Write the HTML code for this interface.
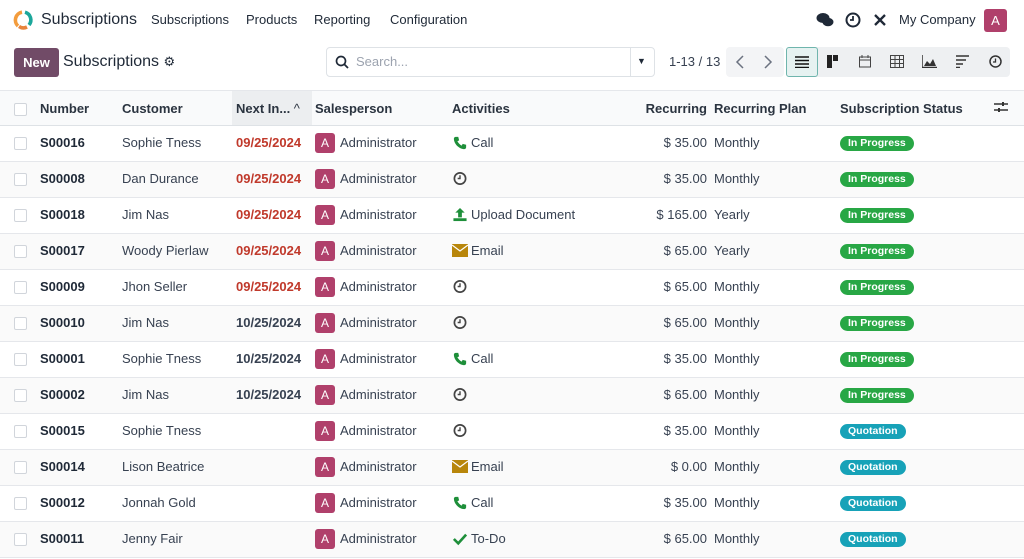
<!DOCTYPE html>
<html><head><meta charset="utf-8"><style>
*{box-sizing:border-box;margin:0;padding:0}
body{width:1024px;height:559px;overflow:hidden;background:#fff;font-family:"Liberation Sans","DejaVu Sans",sans-serif;color:#374151;font-size:13px}
.top{height:40px;position:relative}
.abs{position:absolute;white-space:nowrap}
.nav{font-size:13px;color:#1f2937;top:12px}
.ctl{height:52px;position:relative}
.btn{background:#714b67;color:#fff;font-weight:bold;border-radius:3px}
table{border-collapse:collapse;width:1024px;position:absolute;top:90px;left:0}
th{height:35px;text-align:left;font-weight:bold;color:#2b3440;border-top:1px solid #e5e7eb;border-bottom:1px solid #dee2e6;background:#f9fafb}
td{height:36px;border-bottom:1px solid #e5e7eb;vertical-align:middle;padding-bottom:2px}
tr.alt td{background:#fafafa}
.f{display:flex;align-items:center;height:20px}
.cb{display:inline-block;width:13px;height:13px;border:1px solid #d1d5db;border-radius:2px;background:#fff;vertical-align:middle}
.num{font-weight:bold;color:#1f2937}
.red{color:#c0392b;font-weight:bold}
.dt{color:#374151;font-weight:bold}
.av{display:inline-block;width:20px;height:20px;background:#b0406b;color:#fff;border-radius:3px;text-align:center;line-height:20px;font-size:12px;margin-right:5px}
.bd{display:inline-block;color:#fff;font-size:10.5px;font-weight:bold;border-radius:8px;height:15px;line-height:15px;padding:0 8px}
.g{background:#28a745}.q{background:#17a2b8}
.ic{display:inline-block;width:16px;margin-right:3px}
.r{text-align:right;padding-right:8px}
</style></head><body>
<div class="top">
 <svg class="abs" style="left:12px;top:9px" width="22" height="22" viewBox="0 0 22 22"><path d="M10 3.2A8 8 0 0 0 6 17" stroke="#f39c3c" stroke-width="3.6" fill="none"/><path d="M7 17.5A8 8 0 0 0 15 18" stroke="#e8843c" stroke-width="3.6" fill="none"/><path d="M13 3.2A8 8 0 0 1 17 16" stroke="#1ca79b" stroke-width="3.6" fill="none"/></svg>
 <div class="abs" style="left:41px;top:11px;font-size:16px;color:#1f2937">Subscriptions</div>
 <div class="abs nav" style="left:151px">Subscriptions</div>
 <div class="abs nav" style="left:246px">Products</div>
 <div class="abs nav" style="left:314px">Reporting</div>
 <div class="abs nav" style="left:390px">Configuration</div>
 <svg class="abs" style="left:816px;top:12px" width="18" height="16" viewBox="0 0 18 16"><ellipse cx="7" cy="6" rx="6.5" ry="5" fill="#1f2937"/><ellipse cx="12" cy="10" rx="5.5" ry="4.3" fill="#1f2937"/></svg>
 <svg class="abs" style="left:845px;top:12px" width="16" height="16" viewBox="0 0 16 16"><circle cx="8" cy="8" r="6.5" stroke="#1f2937" stroke-width="2" fill="none"/><path d="M8 4v4H5" stroke="#1f2937" stroke-width="1.8" fill="none"/></svg>
 <svg class="abs" style="left:872px;top:12px" width="16" height="16" viewBox="0 0 16 16"><path d="M3 3l10 10M13 3L3 13" stroke="#1f2937" stroke-width="2.3"/></svg>
 <div class="abs nav" style="left:899px">My Company</div>
 <div class="abs" style="left:984px;top:9px;width:23px;height:23px;background:#b0406b;color:#fff;border-radius:3px;text-align:center;line-height:23px;font-size:13px">A</div>
</div>
<div class="ctl">
 <div class="abs btn" style="left:14px;top:8px;width:45px;height:29px;line-height:29px;text-align:center">New</div>
 <div class="abs" style="left:63px;top:13px;font-size:16px;color:#1f2937">Subscriptions <span style="font-size:13px">⚙</span></div>
 <div class="abs" style="left:326px;top:7px;width:329px;height:30px;border:1px solid #dee2e6;border-radius:4px"></div>
 <div class="abs" style="left:630px;top:8px;width:1px;height:28px;background:#dee2e6"></div>
 <svg class="abs" style="left:335px;top:15px" width="14" height="14" viewBox="0 0 14 14"><circle cx="6" cy="6" r="4.5" stroke="#1f2937" stroke-width="1.7" fill="none"/><path d="M9.5 9.5l3.5 3.5" stroke="#1f2937" stroke-width="1.8"/></svg>
 <div class="abs" style="left:356px;top:14px;color:#9ca3af">Search...</div>
 <div class="abs" style="left:637px;top:16px;font-size:9px;color:#1f2937">▼</div>
 <div class="abs" style="left:669px;top:14px">1-13 / 13</div>
 <div class="abs" style="left:726px;top:7px;width:58px;height:30px;background:#f3f4f6;border-radius:4px"></div>
 <svg class="abs" style="left:735px;top:15px" width="10" height="14"><path d="M8 1L2 7l6 6" stroke="#6b7280" stroke-width="1.5" fill="none"/></svg>
 <svg class="abs" style="left:763px;top:15px" width="10" height="14"><path d="M2 1l6 6-6 6" stroke="#6b7280" stroke-width="1.5" fill="none"/></svg>
 <div class="abs" style="left:786px;top:7px;width:224px;height:30px;background:#eef0f2;border-radius:4px"></div>
 <div class="abs" style="left:786px;top:7px;width:32px;height:30px;background:#e6f2f1;border:1px solid #6fb5ad;border-radius:3px"></div>
 <svg class="abs" style="left:795px;top:16px" width="14" height="12"><path d="M0 1h14M0 4.5h14M0 8h14M0 11.5h14" stroke="#111" stroke-width="1.6"/></svg>
 <svg class="abs" style="left:827px;top:15px" width="14" height="13"><rect x="0" y="0" width="5" height="13" fill="#222"/><rect x="6" y="0" width="5" height="6" fill="#222"/></svg>
 <svg class="abs" style="left:859px;top:15px" width="12" height="13"><rect x="0.5" y="2" width="11" height="10" fill="none" stroke="#444"/><path d="M0 5h12M3 0v3M9 0v3" stroke="#444"/></svg>
 <svg class="abs" style="left:890px;top:15px" width="14" height="13"><rect x="0.5" y="0.5" width="13" height="12" fill="none" stroke="#444"/><path d="M0 4.5h14M0 8.5h14M5 0v13M9.5 0v13" stroke="#444"/></svg>
 <svg class="abs" style="left:922px;top:15px" width="15" height="13"><path d="M0 0v12.5h15" stroke="#333" stroke-width="1.5" fill="none"/><path d="M2 11l3-5 3 3 3-5 3 7z" fill="#333"/></svg>
 <svg class="abs" style="left:956px;top:15px" width="13" height="13"><path d="M0 1h13M0 5h10M0 9h7M0 12.5h4" stroke="#333" stroke-width="1.6"/></svg>
 <svg class="abs" style="left:989px;top:15px" width="13" height="13"><circle cx="6.5" cy="6.5" r="5.5" fill="none" stroke="#333" stroke-width="1.5"/><path d="M6.5 3.5v3.5H4" stroke="#333" stroke-width="1.3" fill="none"/></svg>
</div>
<table>
<tr><th style="width:40px;padding-left:14px"><span class="cb"></span></th><th style="width:82px">Number</th><th style="width:110px">Customer</th><th style="width:80px;background:#eceef0;padding-left:4px">Next In... <span style="font-weight:normal">^</span></th><th style="width:137px;padding-left:3px">Salesperson</th><th style="width:180px;padding-left:3px">Activities</th><th class="r" style="width:85px;padding-right:7px">Recurring</th><th style="width:126px">Recurring Plan</th><th>Subscription Status</th><th style="width:30px"><svg width="14" height="12"><path d="M0 3h14M0 9h14" stroke="#333" stroke-width="1.5"/><rect x="8" y="1" width="2" height="4" fill="#333"/><rect x="4" y="7" width="2" height="4" fill="#333"/></svg></th></tr>
<tbody id="b"></tbody>
</table>
<script>
const phone='<svg class="ic" viewBox="0 0 16 16" height="14"><path d="M3 1l3 0 1 4-2 1c1 2 3 4 5 5l1-2 4 1v3c0 1-1 2-2 2C7 15 1 9 1 3c0-1 1-2 2-2z" fill="#1e8f3a"/></svg>';
const clock='<svg class="ic" viewBox="0 0 16 16" height="15"><circle cx="8" cy="8" r="6" fill="none" stroke="#444" stroke-width="1.8"/><path d="M8 4.5V8H5.5" stroke="#444" stroke-width="1.5" fill="none"/></svg>';
const up='<svg class="ic" viewBox="0 0 16 16" height="15"><path d="M8 1l5 5H10v5H6V6H3z" fill="#1e8f3a"/><rect x="1" y="12" width="14" height="3" fill="#1e8f3a"/></svg>';
const mail='<svg class="ic" viewBox="0 0 16 13" height="13"><rect width="16" height="13" fill="#b8860b"/><path d="M0 1l8 6 8-6" stroke="#fff" stroke-width="1.2" fill="none"/></svg>';
const chk='<svg class="ic" viewBox="0 0 16 16" height="14"><path d="M1 8l5 5L15 3" stroke="#1e8f3a" stroke-width="3" fill="none"/></svg>';
const A={call:phone+'Call',clk:clock,up:up+'Upload Document',mail:mail+'Email',todo:chk+'To-Do'};
const rows=[['S00016','Sophie Tness','09/25/2024','call','35.00','Monthly',1],
['S00008','Dan Durance','09/25/2024','clk','35.00','Monthly',1],
['S00018','Jim Nas','09/25/2024','up','165.00','Yearly',1],
['S00017','Woody Pierlaw','09/25/2024','mail','65.00','Yearly',1],
['S00009','Jhon Seller','09/25/2024','clk','65.00','Monthly',1],
['S00010','Jim Nas','10/25/2024','clk','65.00','Monthly',1],
['S00001','Sophie Tness','10/25/2024','call','35.00','Monthly',1],
['S00002','Jim Nas','10/25/2024','clk','65.00','Monthly',1],
['S00015','Sophie Tness','','clk','35.00','Monthly',0],
['S00014','Lison Beatrice','','mail','0.00','Monthly',0],
['S00012','Jonnah Gold','','call','35.00','Monthly',0],
['S00011','Jenny Fair','','todo','65.00','Monthly',0]];
let h='';rows.forEach((r,i)=>{h+=`<tr class="${i%2?'alt':''}"><td style="padding-left:14px"><span class="cb"></span></td><td class="num">${r[0]}</td><td>${r[1]}</td><td class="${r[2].startsWith('09')?'red':'dt'}" style="padding-left:4px">${r[2]}</td><td style="padding-left:3px"><div class="f"><span class="av">A</span>Administrator</div></td><td style="padding-left:3px"><div class="f">${A[r[3]]}</div></td><td class="r" style="padding-right:7px">$ ${r[4]}</td><td>${r[5]}</td><td><span class="bd ${r[6]?'g':'q'}">${r[6]?'In Progress':'Quotation'}</span></td><td></td></tr>`});
document.getElementById('b').innerHTML=h;
</script>
</body></html>
